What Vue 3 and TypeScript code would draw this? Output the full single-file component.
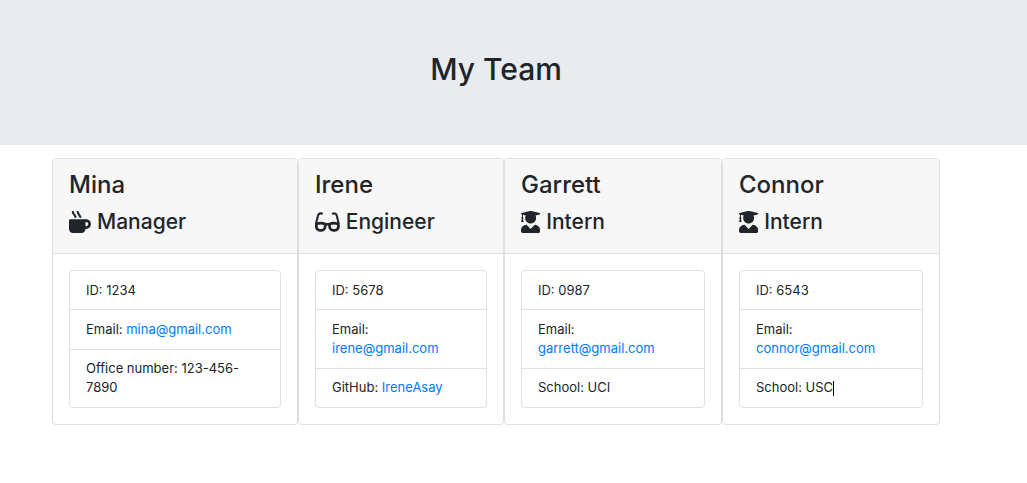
<script setup lang="ts">
type IconName = 'mug' | 'glasses' | 'graduate'

interface Detail {
  label: string
  value: string
  href?: string
  caret?: boolean
}

interface Member {
  name: string
  role: string
  icon: IconName
  details: Detail[]
}

const icons: Record<IconName, { viewBox: string; path: string }> = {
  mug: {
    viewBox: '0 0 512 512',
    path: 'M127.1 146.5c1.3 7.7 8 13.5 16 13.5h16.5c9.8 0 17.6-8.5 16.3-18-3.8-28.2-16.4-54.2-36.6-74.7-14.4-14.7-23.6-33.3-26.4-53.5C111.8 5.9 105 0 96.8 0H80.4C70.6 0 63 8.5 64.1 18c3.9 31.9 18 61.3 40.6 84.4 12 12.2 19.7 27.5 22.4 44.1zm112 0c1.3 7.7 8 13.5 16 13.5h16.5c9.8 0 17.6-8.5 16.3-18-3.8-28.2-16.4-54.2-36.6-74.7-14.4-14.7-23.6-33.3-26.4-53.5C223.8 5.9 217 0 208.8 0h-16.4c-9.8 0-17.5 8.5-16.3 18 3.9 31.9 18 61.3 40.6 84.4 12 12.2 19.7 27.5 22.4 44.1zM400 192H32c-17.7 0-32 14.3-32 32v192c0 53 43 96 96 96h192c53 0 96-43 96-96h16c61.8 0 112-50.2 112-112s-50.2-112-112-112zm0 160h-16v-96h16c26.5 0 48 21.5 48 48s-21.5 48-48 48z',
  },
  glasses: {
    viewBox: '0 0 576 512',
    path: 'M574.1 280.37L528.75 98.66c-5.91-23.7-21.59-44.05-43-55.81-21.44-11.73-46.97-14.11-70.19-6.33l-15.25 5.08c-8.39 2.79-12.92 11.86-10.12 20.24l5.06 15.18c2.79 8.38 11.85 12.91 20.23 10.12l13.18-4.39c10.87-3.62 23-3.57 33.16 1.73 10.29 5.37 17.57 14.56 20.37 25.82l38.46 153.82c-22.19-6.81-49.79-12.46-81.2-12.46-34.77 0-73.98 7.02-114.85 26.74h-73.18c-40.87-19.74-80.08-26.75-114.86-26.75-31.42 0-59.02 5.65-81.21 12.46l38.46-153.83c2.79-11.25 10.09-20.45 20.38-25.81 10.16-5.3 22.28-5.35 33.15-1.73l13.17 4.39c8.38 2.79 17.44-1.74 20.23-10.12l5.06-15.18c2.8-8.38-1.73-17.45-10.12-20.24l-15.25-5.08c-23.22-7.78-48.75-5.41-70.19 6.33-21.41 11.77-37.09 32.11-43 55.8L1.9 280.37A64.218 64.218 0 0 0 0 295.86v70.25C0 429.01 51.58 480 115.2 480h37.12c60.28 0 110.37-45.94 114.88-105.37l2.93-38.63h35.75l2.93 38.63C313.31 434.06 363.4 480 423.68 480h37.12c63.62 0 115.2-50.99 115.2-113.88v-70.25c0-5.23-.64-10.43-1.9-15.5zm-370.72 89.42c-1.97 25.91-24.4 46.21-51.06 46.21H115.2C86.97 416 64 393.62 64 366.11v-37.54c18.12-6.49 43.42-12.92 72.58-12.92 23.86 0 47.26 4.33 69.93 12.92l-3.13 41.22zM512 366.12c0 27.51-22.97 49.88-51.2 49.88h-37.12c-26.67 0-49.1-20.3-51.06-46.21l-3.13-41.22c22.67-8.59 46.08-12.92 69.95-12.92 29.12 0 54.43 6.44 72.55 12.93v37.54z',
  },
  graduate: {
    viewBox: '0 0 448 512',
    path: 'M319.4 320.6L224 416l-95.4-95.4C57.1 323.7 0 382.2 0 454.4v9.6c0 26.5 21.5 48 48 48h352c26.5 0 48-21.5 48-48v-9.6c0-72.2-57.1-130.7-128.6-133.8zM13.6 79.8l6.4 1.5v58.4c-7 4.2-12 11.5-12 20.3 0 8.4 4.6 15.4 11.1 19.7L3.5 242c-1.7 6.9 2.1 14 7.6 14h41.8c5.5 0 9.3-7.1 7.6-14l-15.6-62.3C51.4 175.4 56 168.4 56 160c0-8.8-5-16.1-12-20.3V87.1l66 15.9c-8.6 17.2-14 36.4-14 57 0 70.7 57.3 128 128 128s128-57.3 128-128c0-20.6-5.3-39.8-14-57l96.3-23.2c18.2-4.4 18.2-27.1 0-31.5l-190.4-46c-13-3.1-26.7-3.1-39.7 0L13.6 48.2c-18.1 4.4-18.1 27.2 0 31.6z',
  },
}

const emailDetail = (address: string): Detail => ({
  label: 'Email:',
  value: address,
  href: `mailto:${address}`,
})

const team: Member[] = [
  {
    name: 'Mina',
    role: 'Manager',
    icon: 'mug',
    details: [
      { label: 'ID:', value: '1234' },
      emailDetail('mina@gmail.com'),
      { label: 'Office number:', value: '123-456-7890' },
    ],
  },
  {
    name: 'Irene',
    role: 'Engineer',
    icon: 'glasses',
    details: [
      { label: 'ID:', value: '5678' },
      emailDetail('irene@gmail.com'),
      { label: 'GitHub:', value: 'IreneAsay', href: 'https://github.com/IreneAsay' },
    ],
  },
  {
    name: 'Garrett',
    role: 'Intern',
    icon: 'graduate',
    details: [
      { label: 'ID:', value: '0987' },
      emailDetail('garrett@gmail.com'),
      { label: 'School:', value: 'UCI' },
    ],
  },
  {
    name: 'Connor',
    role: 'Intern',
    icon: 'graduate',
    details: [
      { label: 'ID:', value: '6543' },
      emailDetail('connor@gmail.com'),
      { label: 'School:', value: 'USC', caret: true },
    ],
  },
]
</script>

<template>
  <div class="page">
    <header class="banner">
      <h1>My Team</h1>
    </header>
    <main class="team">
      <article v-for="member in team" :key="member.name" class="card">
        <div class="card-header">
          <h2>{{ member.name }}</h2>
          <h3>
            <svg class="icon" :viewBox="icons[member.icon].viewBox" aria-hidden="true">
              <path :d="icons[member.icon].path" />
            </svg>
            <span>{{ member.role }}</span>
          </h3>
        </div>
        <div class="card-body">
          <ul class="details">
            <li v-for="detail in member.details" :key="detail.label">
              <template v-if="detail.href">{{ detail.label + ' ' }}<a :href="detail.href">{{ detail.value }}</a></template>
              <template v-else>{{ `${detail.label} ${detail.value}` }}</template><span v-if="detail.caret" class="caret"></span>
            </li>
          </ul>
        </div>
      </article>
    </main>
  </div>
</template>

<style>
body {
  margin: 0;
  background: #fff;
}
</style>

<style scoped>
.page {
  color: #212529;
  font-family: Inter, "Liberation Sans", sans-serif;
  font-size: 13px;
  line-height: 19px;
}

h1,
h2,
h3 {
  margin: 0;
  font-weight: 500;
}

.banner {
  padding: 50px 35px 57px 0;
  background: #e9ecef;
  text-align: center;
}

h1 {
  font-size: 30px;
  line-height: 38px;
}

.team {
  display: grid;
  grid-template-columns: 246fr 206fr 218fr 218fr;
  max-width: 888px;
  margin: 13px auto 0;
  padding: 0 87px 0 52px;
}

.card {
  min-width: 0;
  border: 1px solid #dfdfdf;
  border-radius: 4px;
  overflow: hidden;
}

.card-header {
  padding: 10px 16px 16px;
  border-bottom: 1px solid #dfdfdf;
  background: #f7f7f7;
}

h2 {
  margin-bottom: 8px;
  font-size: 24px;
  line-height: 31px;
}

h3 {
  display: flex;
  align-items: center;
  gap: 6px;
  margin-bottom: 2px;
  font-size: 21px;
  line-height: 27px;
}

.icon {
  flex: none;
  height: 22px;
  fill: currentColor;
}

.card-body {
  padding: 16px;
}

.details {
  margin: 0;
  padding: 0;
  border: 1px solid #dfdfdf;
  border-radius: 4px;
  list-style: none;
}

.details li {
  padding: 10px 16px;
}

.details li:first-child {
  padding-bottom: 9px;
}

.details li:last-child {
  padding-top: 9px;
}

.details li + li {
  border-top: 1px solid #dfdfdf;
}

a {
  color: #007bff;
  text-decoration: none;
}

.caret {
  display: inline-block;
  width: 1px;
  height: 15px;
  background: #000;
  vertical-align: middle;
}
</style>
